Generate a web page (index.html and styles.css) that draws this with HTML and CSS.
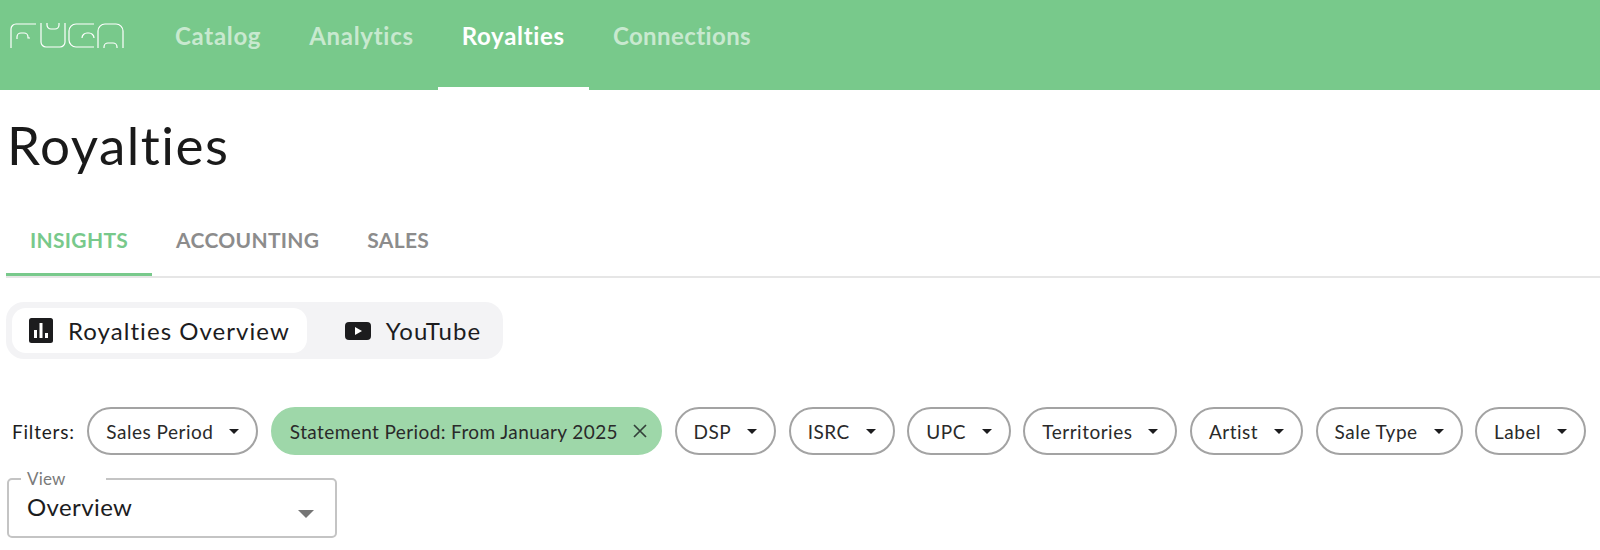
FILE: index.html
```html
<!DOCTYPE html>
<html lang="en">
<head>
<meta charset="utf-8">
<title>Royalties</title>
<link rel="stylesheet" href="styles.css">
</head>
<body>
<header class="topbar">
  <svg class="logo" viewBox="0 0 114 27" width="114" height="27" fill="none" stroke="#fff" stroke-width="1.2">
    <path d="M1 26V7a5 5 0 0 1 5-5h20"/>
    <path d="M7 17v-2a4 4 0 0 1 4-4h3a4 4 0 0 1 4 4v1h2"/>
    <path d="M31 1V20a5 5 0 0 0 5 5h14a5 5 0 0 0 5-5V1"/>
    <path d="M37 1v2a4 4 0 0 0 4 4h4a4 4 0 0 0 4-4V1"/>
    <path d="M84 2H66a7 7 0 0 0-7 7v9a7 7 0 0 0 7 7h18"/>
    <path d="M72 16a5 5 0 0 1 5-5h2a5 5 0 0 1 5 5"/>
    <path d="M88 26V9a7 7 0 0 1 7-7h11a7 7 0 0 1 7 7V26"/>
    <path d="M94 26v-1a4 4 0 0 1 4-4h5a4 4 0 0 1 4 4v1"/>
  </svg>
  <nav class="mainnav">
    <a class="mainnav-item">Catalog</a>
    <a class="mainnav-item">Analytics</a>
    <a class="mainnav-item is-active">Royalties</a>
    <a class="mainnav-item">Connections</a>
  </nav>
</header>
<main class="page">
  <h1 class="title">Royalties</h1>
  <div class="tabs">
    <a class="tab is-active">INSIGHTS</a>
    <a class="tab">ACCOUNTING</a>
    <a class="tab">SALES</a>
  </div>
  <div class="segments">
    <div class="segment is-active">
      <svg class="segment-icon" viewBox="0 0 24 25" width="24" height="25"><rect width="24" height="25" rx="2.5" fill="#1c1c1e"/><path d="M5 12h3v8H5zM10.5 5h3v15h-3zM16 15h3v5h-3z" fill="#fff"/></svg>
      <span>Royalties Overview</span>
    </div>
    <div class="segment">
      <svg class="segment-icon" viewBox="0 0 26 18" width="26" height="18"><rect width="26" height="18" rx="4" fill="#1c1c1e"/><path d="M10 5l7 4-7 4z" fill="#fff"/></svg>
      <span>YouTube</span>
    </div>
  </div>
  <div class="filters">
    <span class="filters-label">Filters:</span>
    <button class="chip">Sales Period<i class="caret"></i></button>
    <button class="chip is-set">Statement Period: From January 2025<svg class="close" viewBox="0 0 14 14" width="14" height="14" fill="none" stroke="#33413a" stroke-width="1.7"><path d="M1 1l12 12M13 1L1 13"/></svg></button>
    <button class="chip">DSP<i class="caret"></i></button>
    <button class="chip">ISRC<i class="caret"></i></button>
    <button class="chip">UPC<i class="caret"></i></button>
    <button class="chip">Territories<i class="caret"></i></button>
    <button class="chip">Artist<i class="caret"></i></button>
    <button class="chip">Sale Type<i class="caret"></i></button>
    <button class="chip">Label<i class="caret"></i></button>
  </div>
  <fieldset class="select">
    <legend class="select-label">View</legend>
    <span class="select-value">Overview</span>
    <i class="select-caret"></i>
  </fieldset>
</main>
</body>
</html>
```
FILE: styles.css
```css
* { box-sizing: border-box; }
html, body { margin: 0; padding: 0; background: #fff; }
body {
  width: 1600px;
  height: 550px;
  overflow: hidden;
  font-family: "Lato", "Open Sans", sans-serif;
  font-variant-ligatures: none;
  color: #1c1c1e;
}
.topbar {
  display: flex;
  align-items: flex-start;
  height: 90px;
  background: #78c98b;
}
.logo { margin: 22px 0 0 10px; flex: none; }
.mainnav { display: flex; margin-left: 27px; height: 90px; }
.mainnav-item {
  display: block;
  height: 90px;
  padding: 21px 24px 0;
  font-size: 24px;
  letter-spacing: .7px;
  line-height: 30px;
  font-weight: 700;
  color: rgba(255, 255, 255, .6);
}
.mainnav-item:last-child { letter-spacing: .4px; }
.mainnav-item.is-active { color: #fff; border-bottom: 3px solid #fff; }
.page { padding: 0 0 0 6px; }
.title {
  margin: 0;
  padding: 24px 0 0 1px;
  font-size: 53px;
  letter-spacing: 1.5px;
  line-height: 62px;
  font-weight: 400;
  color: #1a1a1a;
}
.tabs {
  display: flex;
  margin-top: 34px;
  height: 68px;
  border-bottom: 2px solid #e6e6e6;
}
.tab {
  height: 66px;
  padding: 16px 24px 0;
  font-size: 21px;
  letter-spacing: .3px;
  line-height: 28px;
  font-weight: 700;
  color: #8c8c8c;
}
.tab.is-active { color: #78c98b; border-bottom: 3px solid #78c98b; }
.segments {
  display: flex;
  width: fit-content;
  gap: 22px;
  margin-top: 24px;
  padding: 6px;
  height: 57px;
  border-radius: 18px;
  background: #f3f3f5;
}
.segment {
  display: flex;
  align-items: center;
  gap: 15px;
  height: 45px;
  padding: 0 17px;
  font-size: 24px;
  letter-spacing: 1.05px;
  border-radius: 14px;
}
.segment.is-active { background: #fff; }
.segment + .segment { padding: 0 16px; }
.segment-icon { flex: none; }
.filters { display: flex; align-items: center; gap: 12.5px; margin-top: 48px; padding-left: 6px; height: 48px; }
.filters-label { font-size: 19px; letter-spacing: .8px; flex: none; }
.chip {
  display: flex;
  flex: none;
  align-items: center;
  height: 48px;
  padding: 0 17px;
  border: 2px solid #a3a3a3;
  border-radius: 24px;
  background: #fff;
  font: inherit;
  font-size: 19px;
  letter-spacing: .5px;
  white-space: nowrap;
  color: #2a2a2a;
}
.chip.is-set { background: #9ed7a9; border-color: #9ed7a9; padding-right: 13px; letter-spacing: .4px; }
.caret {
  margin-left: 16px;
  border-left: 5px solid transparent;
  border-right: 5px solid transparent;
  border-top: 5px solid #1c1c1e;
}
.close { margin-left: 15px; }
.select {
  position: relative;
  display: flex;
  align-items: center;
  width: 330px;
  height: 67px;
  margin: 16px 0 0 1px;
  padding: 0 18px;
  border: 2px solid #c4c4c4;
  border-radius: 5px;
}
.select-label { padding: 0 40px 0 6px; margin-left: -6px; font-size: 17px; letter-spacing: .2px; line-height: 16px; color: #7a7a7a; }
.select-value { font-size: 24px; letter-spacing: .4px; line-height: 30px; margin-top: -10px; }
.select-caret {
  position: absolute;
  right: 21px;
  top: 23px;
  border-left: 8.5px solid transparent;
  border-right: 8.5px solid transparent;
  border-top: 8.5px solid #757575;
}
```
